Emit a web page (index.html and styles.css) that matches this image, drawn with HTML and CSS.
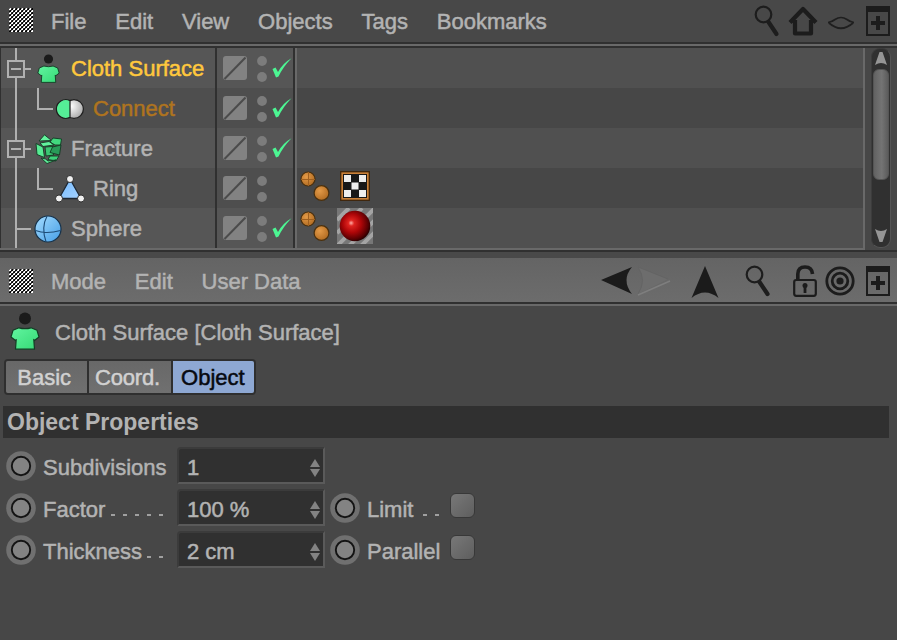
FILE: index.html
```html
<!DOCTYPE html>
<html lang="en">
<head>
<meta charset="utf-8">
<title>Object Manager</title>
<link rel="stylesheet" href="styles.css">
</head>
<body>
<svg class="defs" width="0" height="0" aria-hidden="true">
  <defs>
    <pattern id="weave" width="4" height="4" patternUnits="userSpaceOnUse">
      <path d="M2 0h2v2H2zM0 2h2v2H0z" fill="#050505"/>
      <path d="M0 0h2v2H0zM2 2h2v2H2z" fill="#fff"/>
      <path d="M0 0h1v1H0zM2 2h1v1H2z" fill="#777"/>
      <path d="M2 0h1v1H2zM0 2h1v1H0z" fill="#4a4a4a"/>
    </pattern>
    <linearGradient id="green" x1="0" y1="0" x2="1" y2="1">
      <stop offset="0" stop-color="#62f5a0"/><stop offset="1" stop-color="#35d975"/>
    </linearGradient>
    <linearGradient id="blue" x1="0" y1="0" x2="1" y2="1">
      <stop offset="0" stop-color="#a4dcff"/><stop offset="1" stop-color="#459ee6"/>
    </linearGradient>
    <linearGradient id="sky" x1="0" y1="0" x2="1" y2="1">
      <stop offset="0" stop-color="#74bbff"/><stop offset="1" stop-color="#a5d2ff"/>
    </linearGradient>
    <radialGradient id="white" cx=".35" cy=".35" r=".7">
      <stop offset="0" stop-color="#fff"/><stop offset="1" stop-color="#aaa"/>
    </radialGradient>
    <radialGradient id="orange" cx=".38" cy=".35" r=".7">
      <stop offset="0" stop-color="#e39a48"/><stop offset="1" stop-color="#b06a20"/>
    </radialGradient>
    <radialGradient id="red" cx=".43" cy=".43" r=".6" fx=".37" fy=".4">
      <stop offset="0" stop-color="#ffb0a8"/><stop offset=".16" stop-color="#df2420"/><stop offset=".5" stop-color="#ae0608"/><stop offset=".85" stop-color="#570002"/><stop offset="1" stop-color="#200000"/>
    </radialGradient>
    <symbol id="i-grip" viewBox="0 0 24 24"><rect width="24" height="24" fill="url(#weave)"/></symbol>
    <symbol id="i-shirt" viewBox="0 0 30 38">
      <circle cx="15" cy="6.500" r="6" fill="#1b1b1b"/>
      <path d="M9 15.800Q15 17.500 21 15.800L27 18.300 29 25 24.500 28.500 23.800 27.500 24.500 37.200H5.500L6.200 27.500 5.500 28.500 1 25 3 18.300Z" fill="url(#green)" stroke="#143b24" stroke-width="1.200" stroke-linejoin="round"/>
    </symbol>
    <symbol id="i-connect" viewBox="0 0 30 22">
      <circle cx="19" cy="11" r="9.400" fill="url(#white)" stroke="#1d1d1d" stroke-width="1.200"/>
      <path d="M15 2.600A9.400 9.400 0 1 0 15 19.400Z" fill="#55ee97" stroke="#1d1d1d" stroke-width="1.200"/>
    </symbol>
    <symbol id="i-fracture" viewBox="0 0 28 30">
      <g stroke="#123a22" stroke-width=".9" stroke-linejoin="round">
        <path d="M4 7 9.500 .8 16.500 6.500Z" fill="#62f39d"/>
        <path d="M15 8 18 4 26.500 5 25.500 11 20 11Z" fill="#42d77e"/>
        <path d="M5 9 14 7.500 19 11 8 12.500Z" fill="#62f39d"/>
        <path d="M1 9.500 8 13 9.500 23.500 2 20.500Z" fill="#57eb93"/>
        <path d="M10 13 18 12.500 18.500 21 11 22Z" fill="#3bc673"/>
        <path d="M17.500 13 26 11 24.500 21 15 18.500Z" fill="#299a58"/>
        <path d="M15 22 24 22 21 27 13 25.500Z" fill="#3ed17a"/>
        <path d="M6 24 10.500 25 13 27 21 26 12 29.500Z" fill="#62f39d"/>
      </g>
    </symbol>
    <symbol id="i-ring" viewBox="0 0 30 28">
      <path d="M15 4 4 23.500H26Z" fill="url(#sky)" stroke="#1d2733" stroke-width="1.300"/>
      <g fill="#f0f0f0" stroke="#222" stroke-width=".9"><circle cx="15" cy="4" r="3.500"/><circle cx="4" cy="23.500" r="3.500"/><circle cx="26" cy="23.500" r="3.500"/></g>
    </symbol>
    <symbol id="i-sphere" viewBox="0 0 28 28">
      <circle cx="14" cy="14" r="13" fill="url(#blue)" stroke="#17324a" stroke-width="1.200"/>
      <path d="M1.500 15.500Q12 19.500 26.500 15.500M13 1.200Q7 12 12 26.800" fill="none" stroke="#1d4c77" stroke-width="1.100"/>
    </symbol>
    <symbol id="i-box" viewBox="0 0 24 24">
      <rect width="24" height="24" rx="3" fill="#828282"/><path d="M1.500 23 22.500 1.500" stroke="#4b4b4b" stroke-width="2"/>
    </symbol>
    <symbol id="i-dots" viewBox="0 0 10 26"><g fill="#7c7c7c"><circle cx="5" cy="5" r="4.900"/><circle cx="5" cy="21" r="4.900"/></g></symbol>
    <symbol id="i-check" viewBox="0 0 20 20"><path d="M.5 11 3.500 9.500 6 14Q11 5 19.500.3 11 9 6.500 18.500L4 19.500Z" fill="#4cf693"/></symbol>
    <symbol id="i-balls" viewBox="0 0 30 30">
      <circle cx="8" cy="8" r="7" fill="url(#orange)" stroke="#49300f" stroke-width="1.200"/><path d="M1 8.500H15M8.500 1V15" stroke="#a0601f" fill="none"/>
      <circle cx="21.500" cy="22" r="7.400" fill="url(#orange)" stroke="#49300f" stroke-width="1.200"/>
    </symbol>
    <symbol id="i-checker" viewBox="0 0 30 30">
      <rect x=".7" y=".7" width="28.600" height="28.600" fill="#c98038" stroke="#3e250c" stroke-width="1.300"/>
      <rect x="3" y="3" width="24" height="24" fill="#181818"/>
      <path d="M4 4h7v7H4zM19 4h7v7h-7zM11.500 11.500h7v7h-7zM4 19h7v7H4zM19 19h7v7h-7z" fill="#eee"/>
    </symbol>
    <symbol id="i-material" viewBox="0 0 36 36">
      <rect width="36" height="36" fill="#777"/>
      <path d="M0 12 12 0M0 25 25 0M0 38 38 0M10 40 40 10M24 38 38 24" stroke="#a4a4a4" stroke-width="4"/>
      <circle cx="18" cy="18" r="15.300" fill="url(#red)"/>
    </symbol>
    <symbol id="i-search" viewBox="0 0 26 32">
      <circle cx="9.500" cy="9.500" r="7.800" fill="none" stroke="#1d1d1d" stroke-width="2.200"/>
      <path d="m14.500 17 8 12" stroke="#1d1d1d" stroke-width="4.200" stroke-linecap="round"/>
    </symbol>
    <symbol id="i-home" viewBox="0 0 30 32">
      <path d="M2 17.500 15 4 28 17.500M7 15V28.500H23V15" fill="none" stroke="#1c1c1c" stroke-width="4.200" stroke-linejoin="round"/>
    </symbol>
    <symbol id="i-eye" viewBox="0 0 26 14"><path d="M0 6.500Q4 6 7 3.500 13-.5 19 3.500 22 6 26 6.500M1 7Q13 17.500 25 7" fill="none" stroke="#1f1f1f" stroke-width="1.700"/></symbol>
    <symbol id="i-add" viewBox="0 0 24 30">
      <path d="M1 1H23V29H1Z" fill="none" stroke="#1c1c1c" stroke-width="2"/><path d="M0 0H24V6H0Z" fill="#1c1c1c"/>
      <path d="M5 17H19M12 10V24" stroke="#1c1c1c" stroke-width="4"/>
    </symbol>
    <symbol id="i-history" viewBox="0 0 72 30">
      <path d="M1 14 32 1Q21 14 32 28Z" fill="#1b1b1b"/>
      <path d="M68 13 38 1Q47 14 38 28" fill="#6d6d6d" stroke="#646464"/><path d="m38 29 32-14" stroke="#7e7e7e" stroke-width="1.600"/>
    </symbol>
    <symbol id="i-up" viewBox="0 0 28 32"><path d="M14 0 27.500 32Q14 21 .5 32Z" fill="#1b1b1b"/></symbol>
    <symbol id="i-lock" viewBox="0 0 24 32">
      <path d="M4.800 16V9Q5 2 12 2 19 2 19.500 9" fill="none" stroke="#1c1c1c" stroke-width="3.600"/>
      <rect x="1.200" y="15" width="21.600" height="15.800" rx="2" fill="none" stroke="#1c1c1c" stroke-width="2.200"/>
      <circle cx="12" cy="20.500" r="2.500" fill="#1c1c1c"/><path d="M12 20V28" stroke="#1c1c1c" stroke-width="2.800"/>
    </symbol>
    <symbol id="i-target" viewBox="0 0 30 30"><g fill="none" stroke="#1c1c1c" stroke-width="2.800"><circle cx="15" cy="15" r="13.200"/><circle cx="15" cy="15" r="7.800"/></g><circle cx="15" cy="15" r="3.600" fill="#1c1c1c"/></symbol>
    <symbol id="i-anim" viewBox="0 0 30 30"><circle cx="15" cy="15" r="14.800" fill="#707070"/><circle cx="15" cy="15" r="9.200" fill="#838383" stroke="#141414" stroke-width="1.900"/></symbol>
    <symbol id="i-spin" viewBox="0 0 10 18"><path d="M5 0 10 8H0ZM0 10H10L5 18Z" fill="#838383"/></symbol>
    <symbol id="i-scroll" viewBox="0 0 12 14"><path d="M4.500 0H7.500L12 13Q6 9 0 13Z" fill="#959595"/></symbol>
  </defs>
</svg>

<nav class="menu">
  <svg class="grip"><use href="#i-grip"/></svg>
  <span>File</span><span>Edit</span><span>View</span><span>Objects</span><span>Tags</span><span>Bookmarks</span>
  <div class="tools">
    <svg class="search"><use href="#i-search"/></svg>
    <svg class="home"><use href="#i-home"/></svg>
    <svg class="eye"><use href="#i-eye"/></svg>
    <svg class="add"><use href="#i-add"/></svg>
  </div>
</nav>

<section class="manager">
  <div class="tree">
    <div class="row">
      <div class="name"><svg class="branch"><path d="M16 0V40M25 21H31"/><path class="toggle" d="M8 13H24V29H8ZM11 21H21"/></svg><svg class="shirt"><use href="#i-shirt"/></svg><b class="selected">Cloth Surface</b></div>
      <div class="flags"><svg class="box"><use href="#i-box"/></svg><svg class="dots"><use href="#i-dots"/></svg><svg class="check"><use href="#i-check"/></svg></div>
      <div class="tags"></div>
    </div>
    <div class="row">
      <div class="name child"><svg class="branch"><path d="M16 0V40M38 0V21H53"/></svg><svg class="connect"><use href="#i-connect"/></svg><b class="linked">Connect</b></div>
      <div class="flags"><svg class="box"><use href="#i-box"/></svg><svg class="dots"><use href="#i-dots"/></svg><svg class="check"><use href="#i-check"/></svg></div>
      <div class="tags"></div>
    </div>
    <div class="row">
      <div class="name"><svg class="branch"><path d="M16 0V40M25 21H31"/><path class="toggle" d="M8 13H24V29H8ZM11 21H21"/></svg><svg class="fracture"><use href="#i-fracture"/></svg><b>Fracture</b></div>
      <div class="flags"><svg class="box"><use href="#i-box"/></svg><svg class="dots"><use href="#i-dots"/></svg><svg class="check"><use href="#i-check"/></svg></div>
      <div class="tags"></div>
    </div>
    <div class="row">
      <div class="name child"><svg class="branch"><path d="M16 0V40M38 0V21H53"/></svg><svg class="ring"><use href="#i-ring"/></svg><b>Ring</b></div>
      <div class="flags"><svg class="box"><use href="#i-box"/></svg><svg class="dots"><use href="#i-dots"/></svg></div>
      <div class="tags"><svg class="balls"><use href="#i-balls"/></svg><svg class="checker"><use href="#i-checker"/></svg></div>
    </div>
    <div class="row">
      <div class="name"><svg class="branch"><path d="M16 0V40M16 21H31"/></svg><svg class="sphere"><use href="#i-sphere"/></svg><b>Sphere</b></div>
      <div class="flags"><svg class="box"><use href="#i-box"/></svg><svg class="dots"><use href="#i-dots"/></svg><svg class="check"><use href="#i-check"/></svg></div>
      <div class="tags"><svg class="balls"><use href="#i-balls"/></svg><svg class="material"><use href="#i-material"/></svg></div>
    </div>
  </div>
  <div class="scrollbar"><svg><use href="#i-scroll"/></svg><div class="thumb"></div><svg class="down"><use href="#i-scroll"/></svg></div>
</section>

<nav class="menu attributes">
  <svg class="grip"><use href="#i-grip"/></svg>
  <span>Mode</span><span>Edit</span><span>User Data</span>
  <div class="tools">
    <svg class="history"><use href="#i-history"/></svg>
    <svg class="up"><use href="#i-up"/></svg>
    <svg class="search"><use href="#i-search"/></svg>
    <svg class="lock"><use href="#i-lock"/></svg>
    <svg class="target"><use href="#i-target"/></svg>
    <svg class="add"><use href="#i-add"/></svg>
  </div>
</nav>

<main>
  <header><svg><use href="#i-shirt"/></svg><span>Cloth Surface [Cloth Surface]</span></header>
  <div class="tabs"><span>Basic</span><span>Coord.</span><span class="active">Object</span></div>
  <h2>Object Properties</h2>
  <div class="props">
    <div class="prop"><svg class="anim"><use href="#i-anim"/></svg><label>Subdivisions</label><div class="field">1<svg><use href="#i-spin"/></svg></div></div>
    <div class="prop"><svg class="anim"><use href="#i-anim"/></svg><label>Factor<i class="dash five"></i></label><div class="field">100 %<svg><use href="#i-spin"/></svg></div><svg class="anim"><use href="#i-anim"/></svg><label class="short">Limit<i class="dash limit"></i></label><div class="checkbox"></div></div>
    <div class="prop"><svg class="anim"><use href="#i-anim"/></svg><label>Thickness<i class="dash two"></i></label><div class="field">2 cm<svg><use href="#i-spin"/></svg></div><svg class="anim"><use href="#i-anim"/></svg><label class="short">Parallel</label><div class="checkbox"></div></div>
  </div>
</main>
</body>
</html>
```
FILE: styles.css
```css
* { box-sizing: border-box; }
body {
  margin: 0;
  width: 897px;
  height: 640px;
  overflow: hidden;
  background: #474747;
  color: #b3b3b3;
  font: 22px/40px "Liberation Sans", Arial, sans-serif;
  -webkit-text-stroke: .5px;
  white-space: nowrap;
}
svg { display: block; flex: none; }
.defs { position: absolute; }

.menu {
  display: flex;
  align-items: center;
  height: 48px;
  padding: 0 7px 5px 9px;
  border-bottom: 2px solid #303030;
  background: linear-gradient(#484848 0 42px, #303030 42px 44px, #696969 44px);
}
.grip { width: 24px; height: 24px; margin: 0 18px 1px 0; }
.menu > span { margin: 2px 28.8px 0 0; }
.tools { display: flex; align-items: center; margin-left: auto; }
.search { width: 26px; height: 32px; }
.home { width: 30px; height: 32px; margin-left: 7px; }
.eye { width: 26px; height: 14px; margin: 4px 12px 0 10px; }
.add { width: 24px; height: 30px; }
.menu:not(.attributes) .search { margin-right: 1px; }

.manager {
  display: flex;
  height: 210px;
  border-bottom: 6px solid #494949;
  background: linear-gradient(#474747 0 202px, #303030 202px);
}
.tree {
  width: 865px;
  height: 202px;
  border: solid #696969;
  border-width: 0 2px 2px 0;
}
.row { display: flex; height: 40px; background: #505050; }
.row:nth-child(even) { background: #474747; }
.name, .flags { display: flex; align-items: center; background: #565656; }
.row:nth-child(even) .name, .row:nth-child(even) .flags { background: #4e4e4e; }
.name { width: 217px; border-left: 1px solid #303030; border-right: 2px solid #303030; }
.name b { font-weight: normal; margin-top: 2px; }
.name .selected { color: #ffc83d; }
.name .linked { color: #af741f; }
.branch {
  width: 33px;
  height: 40px;
  margin-left: -1px;
  fill: none;
  stroke: #b0b0b0;
  stroke-width: 2;
}
.toggle { fill: #565656; }
.child .branch { width: 55px; }
.name .shirt { width: 23px; height: 29px; margin: 1px 11px 0 4px; }
.connect { width: 30px; height: 22px; margin: 1px 8px 0 0; }
.fracture { width: 28px; height: 30px; margin: 1px 8px 0 2px; }
.ring { width: 30px; height: 28px; margin: 2px 8px 0 0; }
.sphere { width: 28px; height: 28px; margin: 2px 9px 0 1px; }
.flags { width: 80px; padding-left: 6px; border-right: 2px solid #696969; box-shadow: inset -2px 0 #303030; }
.box { width: 24px; height: 24px; }
.dots { width: 10px; height: 26px; margin: 2px 5px 0 10px; }
.check { width: 20px; height: 20px; margin-bottom: 1px; }
.tags { display: flex; align-items: center; padding-left: 3px; }
.balls { width: 30px; height: 30px; margin-bottom: 4px; }
.checker { width: 30px; height: 30px; margin: 0 0 4px 10px; }
.material { width: 36px; height: 36px; margin: 0 0 4px 7px; }

.scrollbar {
  display: flex;
  flex-direction: column;
  align-items: center;
  width: 20px;
  height: 200px;
  margin-left: 6px;
  padding: 3px 0 5px;
  border: 1px solid #3c3c3c;
  border-right-color: #555;
  border-bottom-color: #555;
  border-radius: 9px;
  background: #303030;
}
.scrollbar svg { width: 12px; height: 14px; }
.thumb {
  width: 16px;
  height: 111px;
  margin: 3px 0 auto;
  border: 1px solid #555;
  border-radius: 6px;
  background: linear-gradient(90deg, #626262, #747474 55%, #5c5c5c);
}
.down { transform: rotate(180deg); }

.attributes {
  padding-top: 4px;
  padding-bottom: 4px;
  border-bottom-color: #696969;
  background: linear-gradient(#646464, #6c6c6c 43px, #6c6c6c 44px, #303030 44px);
}
.history { width: 72px; height: 30px; margin-right: 19px; }
.up { width: 28px; height: 32px; margin: 2px 27px 0 0; }
.attributes .search { margin-left: -1px; }
.lock { width: 24px; height: 32px; margin-left: 22px; }
.target { width: 30px; height: 30px; margin: 0 11px 0 8px; }

header { display: flex; height: 53px; padding: 6px 0 0 10px; }
header svg { width: 30px; height: 38px; margin-right: 15px; }
header span { padding-top: 1px; }
.tabs {
  display: flex;
  width: 252px;
  height: 36px;
  margin-left: 4px;
  border: 2px solid #2f2f2f;
  border-radius: 4px;
  overflow: hidden;
  color: #d1d1d1;
  line-height: 33px;
  text-align: center;
}
.tabs span { width: 84px; padding-right: 5px; border-right: 2px solid #2f2f2f; background: linear-gradient(#686868, #707070); }
.tabs span:nth-child(2) { letter-spacing: -.2px; }
.tabs .active { width: 82px; padding-right: 1px; border: 0; color: #070a10; background: #8ea8d3; }
h2 {
  width: 886px;
  height: 32px;
  margin: 11px 0 0 3px;
  padding-left: 4px;
  background: #303030;
  font: bold 23px/33px "Liberation Sans", Arial, sans-serif;
  -webkit-text-stroke: 0;
}
.props { padding: 9px 0 0 6px; }
.prop { display: flex; height: 42px; }
.anim { width: 30px; height: 30px; margin: 4px 7px 0 0; }
label { display: flex; width: 134px; padding-top: 1px; }
.short { width: 83px; }
.dash {
  height: 2px;
  margin: 24px 0 0 6px;
  background: repeating-linear-gradient(90deg, #a0a0a0 0 4px, transparent 4px 12px);
}
.five { width: 52px; }
.two { width: 16px; margin-left: 5px; }
.limit { width: 16px; margin-left: 10px; }
.field {
  display: flex;
  justify-content: space-between;
  width: 148px;
  height: 37px;
  margin-right: 5px;
  padding: 0 3px 0 8px;
  border: 2px solid #3b3b3b;
  border-right-color: #5a5a5a;
  border-bottom-color: #5a5a5a;
  border-radius: 4px 0 0;
  background: #303030;
  line-height: 37px;
}
.field svg { width: 10px; height: 18px; margin-top: 10px; }
.checkbox {
  width: 25px;
  height: 25px;
  margin-top: 4px;
  border: 1px solid #383838;
  border-radius: 6px;
  background: linear-gradient(135deg, #787878, #5e5e5e);
}
```
